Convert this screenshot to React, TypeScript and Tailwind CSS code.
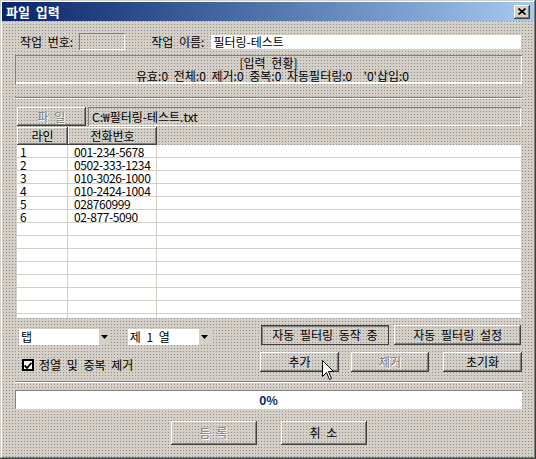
const dots =
  "bg-[#d4d0c8] bg-[conic-gradient(from_270deg_at_1px_1px,#8e8e8e_90deg,transparent_0)] bg-[length:3px_3px]";
const raised = "shadow-[inset_-1px_-1px_#404040,inset_1px_1px_#ffffff,inset_-2px_-2px_#808080]";
const sunkenThin = "shadow-[inset_1px_1px_#808080,inset_-1px_-1px_#ffffff]";
const etched = "h-[2px] w-[507px] border-t border-t-[#808080] border-b border-b-white";

const PHONES = ["001-234-5678", "0502-333-1234", "010-3026-1000", "010-2424-1004", "028760999", "02-877-5090"];

function Button({
  label,
  className,
  disabled,
  pressed,
}: {
  label: string;
  className: string;
  disabled?: boolean;
  pressed?: boolean;
}) {
  return (
    <div
      className={`flex items-center justify-center text-[12px] leading-none ${
        pressed ? "shadow-[inset_0_0_0_1px_#404040,inset_2px_2px_#808080]" : raised
      } ${disabled ? "text-[#808080] [text-shadow:1px_1px_#ffffff]" : "text-black"} ${className}`}
    >
      {label}
    </div>
  );
}

function Combo({ value, className }: { value: string; className: string }) {
  return (
    <div className={`flex h-[16px] bg-white ${className}`}>
      <div className="flex-1 pl-[2px] text-[12px] leading-[16px]">{value}</div>
      <div className="flex w-[12px] items-center justify-center bg-[#d4d0c8]">
        <svg width="7" height="4" viewBox="0 0 7 4">
          <path d="M0 0H7L3.5 4Z" fill="#000" />
        </svg>
      </div>
    </div>
  );
}

export default function App() {
  return (
    <div
      className={`relative flex h-[459px] w-[536px] flex-col p-[2px] font-['Noto_Sans_CJK_KR',sans-serif] text-black [word-spacing:3px] ${dots} shadow-[inset_-1px_-1px_#404040,inset_1px_1px_#d4d0c8,inset_-2px_-2px_#808080,inset_2px_2px_#ffffff]`}
    >
      {/* Title bar */}
      <div className="flex h-[19px] shrink-0 items-center justify-between bg-gradient-to-r from-[#0a246a] to-[#a6caf0] pl-[4px] pr-[4px]">
        <span className="text-[13px] font-bold leading-none text-white">파일 입력</span>
        <div className={`flex h-[14px] w-[16px] items-center justify-center bg-[#d4d0c8] ${raised}`}>
          <svg width="8" height="7" viewBox="0 0 8 7">
            <path d="M0.5 0.5L7.5 6.5M7.5 0.5L0.5 6.5" stroke="#000" strokeWidth="1.6" />
          </svg>
        </div>
      </div>

      <div className="flex flex-col px-[13px]">
        {/* Job row */}
        <div className="mt-[12px] flex h-[17px] items-center text-[12px] leading-none">
          <span className="ml-[5px]">작업 번호:</span>
          <div className={`ml-[6px] h-[17px] w-[46px] ${sunkenThin}`} />
          <span className="ml-[26px]">작업 이름:</span>
          <div className="ml-[7px] h-[14px] flex-1 bg-white pl-[2px] leading-[14px]">필터링-테스트</div>
        </div>

        {/* Status group */}
        <div className="mt-[5px] flex h-[29px] w-[507px] flex-col items-center pt-[1px] text-[12px] leading-[13px] shadow-[inset_1px_1px_#808080,inset_-1px_-2px_#ffffff]">
          <span>[입력 현황]</span>
          <span className="whitespace-pre pl-[8px]">유효:0 전체:0 제거:0 중복:0 자동필터링:0  '0'삽입:0</span>
        </div>

        <div className={`mt-[13px] ${etched}`} />

        {/* File row */}
        <div className="ml-[2px] mt-[8px] flex h-[19px]">
          <Button label="파 일" disabled className="w-[69px]" />
          <div className={`ml-[2px] flex w-[433px] items-center pl-[4px] text-[12px] leading-none ${sunkenThin}`}>
            C:₩필터링-테스트.txt
          </div>
        </div>

        {/* List view */}
        <div className="ml-[2px] mt-[1px] flex h-[191px] w-[504px] flex-col overflow-hidden">
          <div className="flex h-[18px] shrink-0 text-[12px] leading-none">
            <div className={`flex w-[51px] items-center justify-center ${raised}`}>라인</div>
            <div className={`flex w-[89px] items-center justify-center ${raised}`}>전화번호</div>
            <div className="flex-1" />
          </div>
          <div className="flex min-h-0 flex-1 flex-col overflow-hidden bg-white">
            {Array.from({ length: 14 }).map((_, i) => (
              <div
                key={i}
                className="flex h-[13px] shrink-0 text-[12px] leading-[13px] tracking-[-0.4px] shadow-[inset_0_-1px_#d4d0c8] [word-spacing:0]"
              >
                <div className="w-[51px] pl-[3px] shadow-[inset_-1px_0_#d4d0c8]">{i < PHONES.length ? i + 1 : ""}</div>
                <div className="w-[89px] pl-[6px] shadow-[inset_-1px_0_#d4d0c8]">{PHONES[i] ?? ""}</div>
                <div className="flex-1" />
              </div>
            ))}
          </div>
        </div>

        {/* Controls row 1 */}
        <div className="mt-[7px] flex h-[20px] items-end">
          <Combo value="탭" className="ml-[4px] w-[92px]" />
          <Combo value="제 1 열" className="ml-[17px] w-[83px]" />
          <Button label="자동 필터링 동작 중" pressed className="ml-[50px] h-[20px] w-[129px]" />
          <Button label="자동 필터링 설정" className="ml-[5px] h-[20px] w-[127px]" />
        </div>

        {/* Controls row 2 */}
        <div className="mt-[7px] flex h-[20px] w-[507px] items-center justify-between">
          <div className="ml-[7px] mt-[6px] flex items-center gap-[5px] text-[12px] leading-none">
            <div className="flex h-[12px] w-[12px] items-center justify-center border-2 border-black bg-white">
              <svg width="8" height="7" viewBox="0 0 8 7">
                <path d="M0.5 3.5L3 6L7.5 0.8" stroke="#000" strokeWidth="1.8" fill="none" />
              </svg>
            </div>
            <span>정열 및 중복 제거</span>
          </div>
          <div className="flex h-[20px]">
            <Button label="추가" className="w-[79px]" />
            <Button label="제거" disabled className="ml-[12px] w-[78px]" />
            <Button label="초기화" className="ml-[14px] w-[79px]" />
          </div>
        </div>

        <div className={`mt-[9px] ${etched}`} />

        {/* Progress */}
        <div
          className={`mt-[7px] flex h-[19px] w-[507px] items-center justify-center bg-white text-[12px] font-bold leading-none text-[#0a246a] ${sunkenThin}`}
        >
          0%
        </div>

        {/* Bottom buttons */}
        <div className="mt-[12px] flex h-[24px] w-[507px] justify-center gap-[24px]">
          <Button label="등 록" disabled className="w-[86px]" />
          <Button label="취 소" className="w-[86px]" />
        </div>
      </div>

      {/* Mouse cursor */}
      <svg className="absolute left-[322px] top-[360px]" width="13" height="21" viewBox="0 0 13 21">
        <path d="M0.5 0.5V16.5L4.5 12.5L7.5 19.5L9.5 18.5L6.5 11.5H11.5Z" fill="#fff" stroke="#000" strokeWidth="1" />
      </svg>
    </div>
  );
}
